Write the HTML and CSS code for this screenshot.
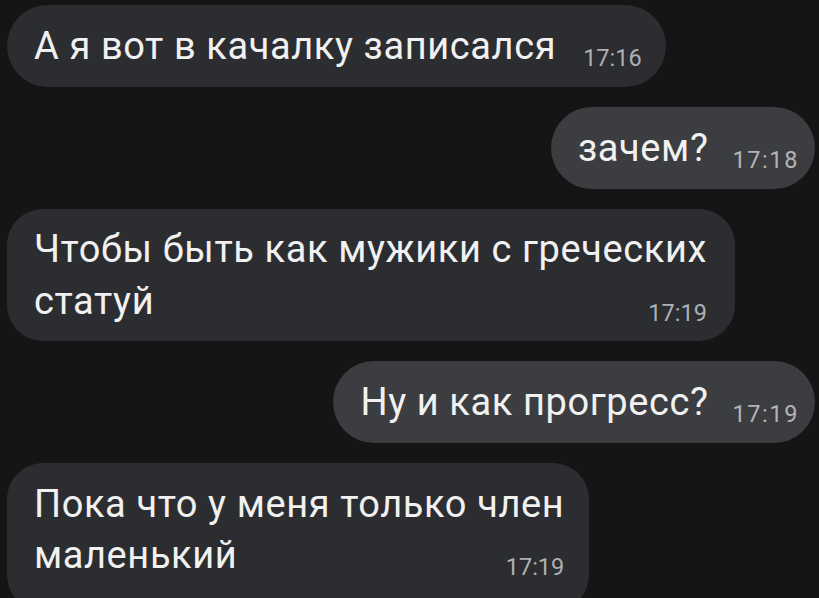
FILE: index.html
```html
<!DOCTYPE html>
<html lang="ru">
<head>
<meta charset="utf-8">
<title>Чат</title>
<link rel="stylesheet" href="styles.css">
</head>
<body>
<main class="chat">
  <div class="bubble in single">А я вот в качалку записался<span class="time">17:16</span></div>
  <div class="bubble out single">зачем?<span class="time">17:18</span></div>
  <div class="bubble in multi">
    <p class="text">Чтобы быть как мужики с греческих<br>статуй</p>
    <span class="time">17:19</span>
  </div>
  <div class="bubble out single">Ну и как прогресс?<span class="time">17:19</span></div>
  <div class="bubble in multi last">
    <p class="text">Пока что у меня только член<br>маленький</p>
    <span class="time">17:19</span>
  </div>
</main>
</body>
</html>
```

FILE: styles.css
```css
html, body {
  margin: 0;
  padding: 0;
  background: #151515;
  height: 100%;
  overflow: hidden;
}

.chat {
  display: flex;
  flex-direction: column;
  gap: 20px;
  padding: 5px 4px 0 7px;
  font-family: Roboto, "Noto Sans", sans-serif;
  color: #f1f1f1;
}

.bubble {
  font-size: 38px;
  line-height: 52px;
  letter-spacing: 0.6px;
  background: #2b2d30;
  white-space: nowrap;
}

.bubble.in {
  align-self: flex-start;
}

.bubble.out {
  align-self: flex-end;
  background: #3c3d40;
}

.single {
  padding: 15px 22px 15px 27px;
  border-radius: 41px;
}

.in.single {
  padding-right: 24px;
}

.out.single {
  padding-right: 16px;
}

.time {
  font-size: 23.5px;
  line-height: 26px;
  color: #aeb0b3;
  letter-spacing: 0;
}

.out .time {
  letter-spacing: 1.6px;
  color: #b3b4b6;
}

.single .time {
  display: inline-block;
  vertical-align: -7px;
  margin-left: 27px;
}

.out.single .time {
  margin-left: 24px;
}

.multi {
  display: grid;
  padding: 14px 28px 14px 27px;
  border-radius: 36px;
}

.multi > * {
  grid-area: 1 / 1;
}

.multi .text {
  margin: 0;
}

.multi .time {
  justify-self: end;
  align-self: end;
  margin-bottom: 1px;
}

.multi.last {
  line-height: 51px;
  padding-top: 16px;
  padding-right: 25px;
  padding-bottom: 30px;
}
```
